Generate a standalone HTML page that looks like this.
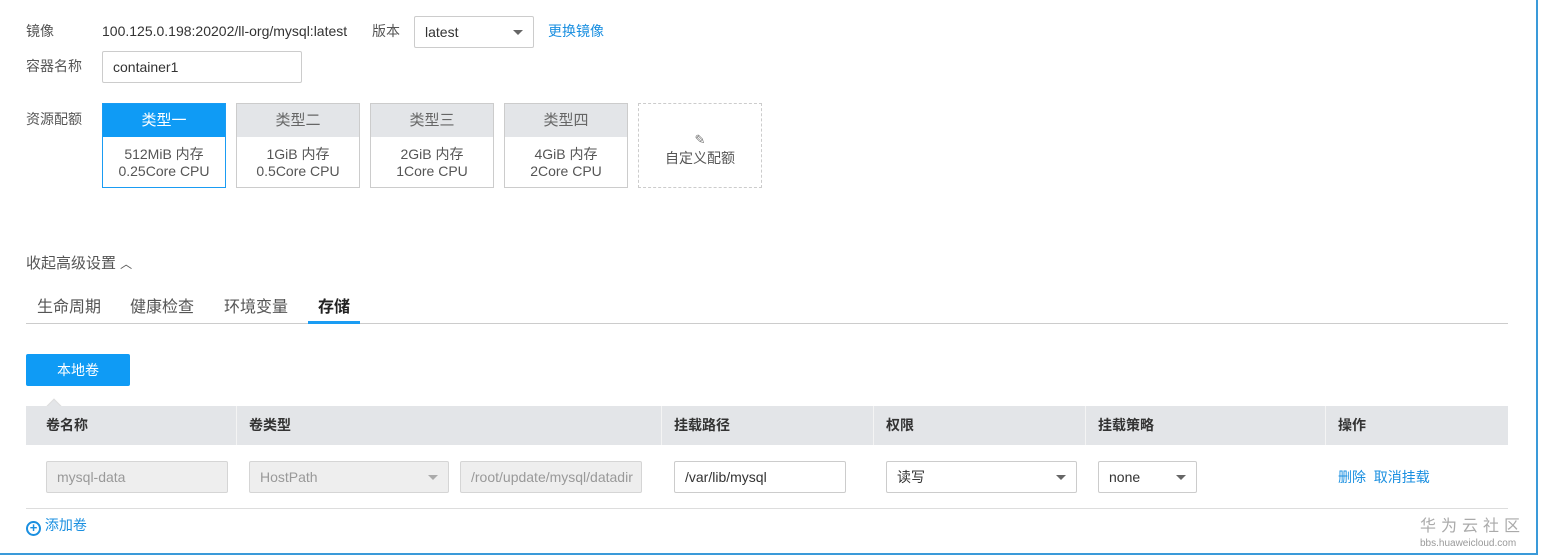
<!DOCTYPE html>
<html><head><meta charset="utf-8"><style>
*{box-sizing:border-box;margin:0;padding:0}
body{width:1542px;height:559px;background:#fff;position:relative;overflow:hidden;font-family:"Liberation Sans","Noto Sans CJK SC",sans-serif;font-size:14px;color:#333;line-height:1.2}
.a{position:absolute}
.lbl{color:#555}
.inp{position:absolute;border:1px solid #ccc;border-radius:2px;height:32px;line-height:30px;padding-left:10px;background:#fff;white-space:nowrap;overflow:hidden}
.dis{background:#eeeeee;color:#999;border-color:#d5d5d5}
.car{position:absolute;right:10px;top:13px;width:0;height:0;border-left:5px solid transparent;border-right:5px solid transparent;border-top:5px solid #666}
.card{position:absolute;top:103px;width:124px;height:85px;border:1px solid #ccc;text-align:center;color:#555;font-size:14px}
.card .h{height:33px;line-height:33px;background:#e3e5e8;font-size:15px;color:#666}
.card .b{padding-top:9px;line-height:17px}
.th{position:absolute;top:406px;height:39px;line-height:39px;background:#e3e5e8;font-weight:bold;color:#333;padding-left:12px;border-right:1px solid #f4f4f4}
.blue{color:#1a8fe0}
</style></head><body>
<div class="a" style="left:1536px;top:0;width:2px;height:555px;background:#3a9ad9"></div>
<div class="a" style="left:0;top:553px;width:1538px;height:2px;background:#3a9ad9"></div>

<div class="a lbl" style="left:26px;top:23px">镜像</div>
<div class="a" style="left:102px;top:23px">100.125.0.198:20202/ll-org/mysql:latest</div>
<div class="a lbl" style="left:372px;top:23px">版本</div>
<div class="inp" style="left:414px;top:16px;width:120px">latest<span class="car"></span></div>
<div class="a blue" style="left:548px;top:23px">更换镜像</div>

<div class="a lbl" style="left:26px;top:58px">容器名称</div>
<div class="inp" style="left:102px;top:51px;width:200px">container1</div>

<div class="a lbl" style="left:26px;top:111px">资源配额</div>
<div class="card" style="left:102px;border-color:#1a9cf3"><div class="h" style="background:#0f9bf5;color:#fff">类型一</div><div class="b">512MiB 内存<br>0.25Core CPU</div></div>
<div class="card" style="left:236px"><div class="h">类型二</div><div class="b">1GiB 内存<br>0.5Core CPU</div></div>
<div class="card" style="left:370px"><div class="h">类型三</div><div class="b">2GiB 内存<br>1Core CPU</div></div>
<div class="card" style="left:504px"><div class="h">类型四</div><div class="b">4GiB 内存<br>2Core CPU</div></div>
<div class="card" style="left:638px;border:1px dashed #ccc"><div style="padding-top:28px;color:#777;font-size:13px">✎</div><div style="line-height:20px">自定义配额</div></div>

<div class="a" style="left:26px;top:255px;font-size:15px;color:#555">收起高级设置 <span style="font-size:12px">︿</span></div>

<div class="a" style="left:37px;top:298px;font-size:16px;color:#555">生命周期</div>
<div class="a" style="left:130px;top:298px;font-size:16px;color:#555">健康检查</div>
<div class="a" style="left:224px;top:298px;font-size:16px;color:#555">环境变量</div>
<div class="a" style="left:318px;top:298px;font-size:16px;font-weight:bold;color:#222">存储</div>
<div class="a" style="left:26px;top:323px;width:1482px;height:1px;background:#ccc"></div>
<div class="a" style="left:308px;top:321px;width:52px;height:3px;background:#1a9cf3"></div>

<div class="a" style="left:26px;top:354px;width:104px;height:32px;line-height:32px;background:#0f9bf5;color:#fff;text-align:center;border-radius:2px">本地卷</div>
<div class="a" style="top:401px;left:48px;width:12px;height:12px;border-left:1px solid #ddd;border-top:1px solid #ddd;transform:rotate(45deg);background:#e3e5e8"></div>

<div class="th" style="left:26px;width:211px;padding-left:20px">卷名称</div>
<div class="th" style="left:237px;width:425px">卷类型</div>
<div class="th" style="left:662px;width:212px">挂载路径</div>
<div class="th" style="left:874px;width:212px">权限</div>
<div class="th" style="left:1086px;width:240px">挂载策略</div>
<div class="th" style="left:1326px;width:182px;border-right:0">操作</div>

<div class="inp dis" style="left:46px;top:461px;width:182px">mysql-data</div>
<div class="inp dis" style="left:249px;top:461px;width:200px">HostPath<span class="car" style="border-top-color:#aaa"></span></div>
<div class="inp dis" style="left:460px;top:461px;width:182px">/root/update/mysql/datadir</div>
<div class="inp" style="left:674px;top:461px;width:172px">/var/lib/mysql</div>
<div class="inp" style="left:886px;top:461px;width:191px">读写<span class="car"></span></div>
<div class="inp" style="left:1098px;top:461px;width:99px">none<span class="car"></span></div>
<div class="a blue" style="left:1338px;top:469px">删除&nbsp;&nbsp;取消挂载</div>
<div class="a" style="left:26px;top:508px;width:1482px;height:1px;background:#ddd"></div>

<div class="a blue" style="left:26px;top:517px;font-size:14px"><span style="display:inline-block;width:15px;height:15px;border:2px solid #1a8fe0;border-radius:50%;text-align:center;line-height:10px;font-weight:bold;font-size:13px;vertical-align:-2px">+</span> 添加卷</div>

<div class="a" style="left:1420px;top:518px;font-size:16px;line-height:18px;color:#aaa;letter-spacing:5px">华为云社区</div>
<div class="a" style="left:1420px;top:538px;font-size:10px;line-height:12px;color:#999">bbs.huaweicloud.com</div>
</body></html>
